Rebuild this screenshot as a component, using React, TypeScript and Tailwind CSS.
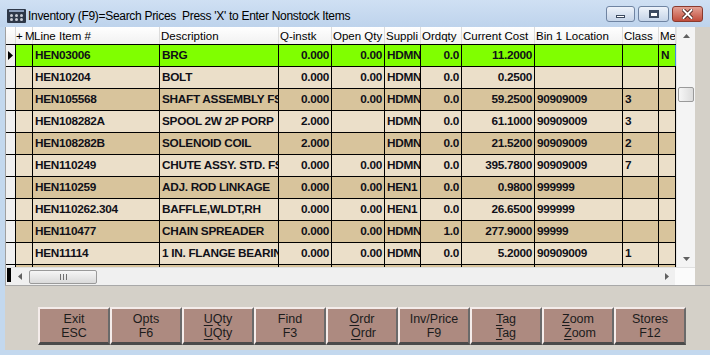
import React from "react";

const widths = [
  "w-[17px]",
  "w-[127px]",
  "w-[119px]",
  "w-[53px]",
  "w-[53px]",
  "w-[36px]",
  "w-[41px]",
  "w-[73px]",
  "w-[88px]",
  "w-[36px]",
  "w-[17px]",
];
const right = [false, false, false, true, true, false, true, true, false, false, false];
const headers = ["+ M", "Line Item #", "Description", "Q-instk", "Open Qty", "Suppli", "Ordqty", "Current Cost", "Bin 1 Location", "Class", "Me"];

const rows: string[][] = [
  ["", "HEN03006", "BRG", "0.000", "0.00", "HDMN", "0.0", "11.2000", "", "", "N"],
  ["", "HEN10204", "BOLT", "0.000", "0.00", "HDMN", "0.0", "0.2500", "", "", ""],
  ["", "HEN105568", "SHAFT ASSEMBLY FS", "0.000", "0.00", "HDMN", "0.0", "59.2500", "90909009", "3", ""],
  ["", "HEN108282A", "SPOOL 2W 2P PORP", "2.000", "", "HDMN", "0.0", "61.1000", "90909009", "3", ""],
  ["", "HEN108282B", "SOLENOID COIL", "2.000", "", "HDMN", "0.0", "21.5200", "90909009", "2", ""],
  ["", "HEN110249", "CHUTE ASSY. STD. FS", "0.000", "0.00", "HDMN", "0.0", "395.7800", "90909009", "7", ""],
  ["", "HEN110259", "ADJ. ROD LINKAGE", "0.000", "0.00", "HEN1", "0.0", "0.9800", "999999", "", ""],
  ["", "HEN110262.304", "BAFFLE,WLDT,RH", "0.000", "0.00", "HEN1", "0.0", "26.6500", "999999", "", ""],
  ["", "HEN110477", "CHAIN SPREADER", "0.000", "0.00", "HDMN", "1.0", "277.9000", "99999", "", ""],
  ["", "HEN11114", "1 IN. FLANGE BEARIN", "0.000", "0.00", "HDMN", "0.0", "5.2000", "90909009", "1", ""],
];

const rowBg = (i: number) => (i === 0 ? "bg-[#80ff00]" : i % 2 === 1 ? "bg-[#ebdfc9]" : "bg-[#d8c49c]");

function U({ c }: { c: string }) {
  return <span className="underline underline-offset-2">{c}</span>;
}

const buttons: [React.ReactNode, React.ReactNode][] = [
  ["Exit", "ESC"],
  ["Opts", "F6"],
  [<><U c="U" />Qty</>, <><U c="U" />Qty</>],
  ["Find", "F3"],
  [<><U c="O" />rdr</>, <span className="pl-[3px]"><U c="O" />rdr</span>],
  ["Inv/Price", "F9"],
  [<><U c="T" />ag</>, <><U c="T" />ag</>],
  [<><U c="Z" />oom</>, <span className="pl-[4px]"><U c="Z" />oom</span>],
  ["Stores", "F12"],
];

export default function App() {
  return (
    <div className="w-[710px] h-[355px] bg-[#c3d8ee] flex flex-col overflow-hidden font-['Liberation_Sans',Arial,sans-serif]">
      {/* Title bar */}
      <div className="h-[27px] flex items-center bg-gradient-to-b from-[#cfe0f3] to-[#bed3ec] relative">
        <div className="ml-[7px] w-[19px] h-[14px] mt-[4px] bg-[#2e3848] rounded-[1px] flex flex-col items-center">
          <div className="w-[15px] h-[2px] mt-[1px] bg-[#8ea0bc]" />
          <div className="flex gap-[2px] mt-[2px]">
            <div className="w-[3px] h-[3px] bg-[#c8ccd4] rounded-full" />
            <div className="w-[3px] h-[3px] bg-[#c8ccd4] rounded-full" />
            <div className="w-[3px] h-[3px] bg-[#c8ccd4] rounded-full" />
          </div>
          <div className="flex gap-[2px] mt-[1px]">
            <div className="w-[3px] h-[3px] bg-[#c8ccd4] rounded-full" />
            <div className="w-[3px] h-[3px] bg-[#c8ccd4] rounded-full" />
            <div className="w-[3px] h-[3px] bg-[#c8ccd4] rounded-full" />
          </div>
        </div>
        <div className="ml-[2px] mt-[4px] text-[12px] text-black tracking-[-0.3px] whitespace-pre">
          Inventory (F9)=Search Prices  Press 'X' to Enter Nonstock Items
        </div>
        <div className="ml-auto mr-[7px] mt-[1px] flex gap-[3px]">
          <div className="w-[29px] h-[16px] rounded-[3px] border border-[#6f84a2] bg-gradient-to-b from-[#eef3fa] to-[#c5d4e8] flex items-center justify-center">
            <div className="w-[9px] h-[3px] mt-[5px] bg-white border border-[#3c4a60]" />
          </div>
          <div className="w-[31px] h-[16px] rounded-[3px] border border-[#6f84a2] bg-gradient-to-b from-[#eef3fa] to-[#c5d4e8] flex items-center justify-center">
            <div className="w-[10px] h-[8px] border-[2px] border-t-[3px] border-[#3c4a60] bg-white" />
          </div>
          <div className="w-[31px] h-[16px] rounded-[3px] border border-[#8a3a2e] bg-gradient-to-b from-[#e3a094] to-[#c04c3c] flex items-center justify-center">
            <svg width="11" height="10" viewBox="0 0 11 10">
              <path d="M1.5 1 L9.5 9 M9.5 1 L1.5 9" stroke="#3a1410" strokeWidth="3.6" strokeLinecap="square" />
              <path d="M1.5 1 L9.5 9 M9.5 1 L1.5 9" stroke="#ffffff" strokeWidth="2" strokeLinecap="square" />
            </svg>
          </div>
        </div>
      </div>

      {/* Window body */}
      <div className="flex-1 flex pl-[5px] pb-[5px]">
        <div className="flex-1 flex flex-col bg-[#d4d0c8]">
          {/* grid area */}
          <div className="h-[258px] flex flex-col w-[690px] border-l border-[#a0a0a0]">
            <div className="h-[240px] flex">
              <div className="w-[670px] h-[240px] flex flex-col overflow-hidden bg-[#d8c49c]">
                {/* header */}
                <div className="h-[18px] flex border-b border-black shrink-0 bg-gradient-to-b from-white to-[#f1f1f1] text-[11.5px] text-black">
                  <div className="w-[10px] h-full border-r border-[#d8d8d8]" />
                  {headers.map((h, i) => (
                    <div
                      key={i}
                      className={`${widths[i]} h-full border-r border-[#dcdcdc] pt-[2px] whitespace-nowrap leading-[14px] ${
                        i === 0 ? "overflow-visible pl-0 tracking-[-0.4px] relative z-10" : "overflow-hidden pl-[1px]"
                      }`}
                    >
                      {h}
                    </div>
                  ))}
                </div>
                {rows.map((r, ri) => (
                  <div key={ri} className={`h-[22px] flex shrink-0 border-b border-black ${rowBg(ri)}`}>
                    <div className="w-[10px] h-full bg-[#f0f0f0] border-r border-black flex items-center">
                      {ri === 0 && (
                        <svg width="5" height="9" viewBox="0 0 5 9" className="ml-[2px]">
                          <path d="M0 0 L5 4.5 L0 9 Z" fill="#000" />
                        </svg>
                      )}
                    </div>
                    {r.map((c, ci) => (
                      <div
                        key={ci}
                        className={`${widths[ci]} h-full border-r ${
                          ri === 0 && ci === 10 ? "border-[#3d8ee8]" : "border-black"
                        } flex items-center whitespace-nowrap overflow-hidden text-[11.8px] tracking-[-0.3px] font-bold text-[#101018] ${
                          right[ci] ? "justify-end pr-[2px]" : "pl-[2px]"
                        }`}
                      >
                        {c}
                      </div>
                    ))}
                  </div>
                ))}
                <div className="flex shrink-0 h-[4px] bg-[#d8c49c]">
                  <div className="w-[10px] h-full bg-[#f0f0f0] border-r border-black" />
                  {widths.map((w, i) => (
                    <div key={i} className={`${w} h-full border-r border-black`} />
                  ))}
                </div>
              </div>
              {/* vertical scrollbar */}
              <div className="w-[19px] h-[240px] bg-[#f4f4f4] border-l border-[#e4e4e4] flex flex-col items-center">
                <div className="h-[17px] flex items-center justify-center">
                  <svg width="7" height="4" viewBox="0 0 7 4">
                    <path d="M0 4 L3.5 0 L7 4 Z" fill="#606060" />
                  </svg>
                </div>
                <div className="mt-[43px] w-[16px] h-[15px] rounded-[2px] border border-[#9a9a9a] bg-gradient-to-r from-[#f6f6f6] to-[#dcdcdc]" />
                <div className="mt-auto h-[17px] flex items-center justify-center">
                  <svg width="7" height="4" viewBox="0 0 7 4">
                    <path d="M0 0 L3.5 4 L7 0 Z" fill="#606060" />
                  </svg>
                </div>
              </div>
            </div>
            {/* horizontal scrollbar */}
            <div className="h-[18px] flex bg-[#f0f0f0] border-t border-[#e0e0e0]">
              <div className="w-[4px] h-[14px] bg-black ml-[1px]" />
              <div className="w-[665px] h-full flex items-center">
                <div className="w-[18px] flex justify-center">
                  <svg width="4" height="7" viewBox="0 0 4 7">
                    <path d="M4 0 L0 3.5 L4 7 Z" fill="#606060" />
                  </svg>
                </div>
                <div className="w-[68px] h-[14px] rounded-[2px] border border-[#9a9a9a] bg-gradient-to-b from-[#f6f6f6] to-[#dadada] flex items-center justify-center gap-[2px]">
                  <div className="w-px h-[6px] bg-[#707070]" />
                  <div className="w-px h-[6px] bg-[#707070]" />
                  <div className="w-px h-[6px] bg-[#707070]" />
                </div>
                <div className="ml-auto w-[17px] flex justify-center">
                  <svg width="4" height="7" viewBox="0 0 4 7">
                    <path d="M0 0 L4 3.5 L0 7 Z" fill="#606060" />
                  </svg>
                </div>
              </div>
              <div className="w-[20px] h-full bg-[#fbfbfb]" />
            </div>
          </div>
          {/* bottom buttons */}
          <div className="flex-1 border-t border-[#a8a8a8] pl-[33px] pt-[21px] flex">
            {buttons.map(([a, b], i) => (
              <div
                key={i}
                className="w-[72px] h-[38px] bg-[#ad8a80] border-t-2 border-l-2 border-t-[#f4ecea] border-l-[#f4ecea] border-b-[3px] border-r-2 border-b-[#4a4a4a] border-r-[#6a6a6a] flex flex-col items-center justify-center text-[12.5px] leading-[14px] text-[#1c1c1c]"
              >
                <div>{a}</div>
                <div>{b}</div>
              </div>
            ))}
          </div>
        </div>
      </div>
    </div>
  );
}
